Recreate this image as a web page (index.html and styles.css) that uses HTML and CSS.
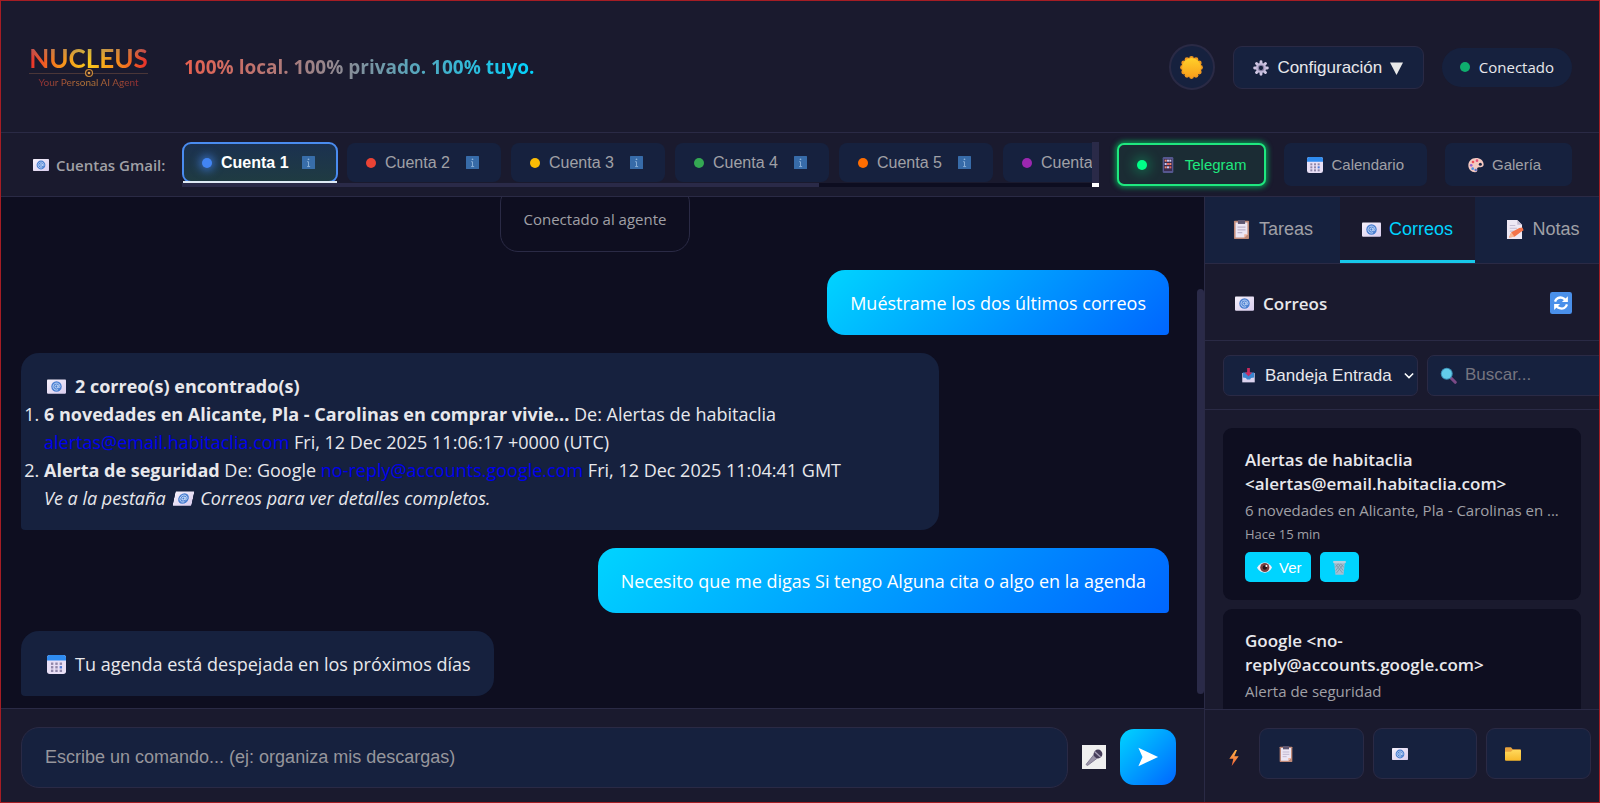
FILE: index.html
```html
<!DOCTYPE html>
<html lang="es">
<head>
    <meta charset="UTF-8">
    <meta name="viewport" content="width=device-width, initial-scale=1.0">
    <title>Nucleus</title>
    <link rel="stylesheet" href="styles.css">
</head>
<body>
    <svg class="sprite" aria-hidden="true">
        <defs>
            <linearGradient id="g-sun" x1="0" y1="0" x2="0" y2="1"><stop offset="0" stop-color="#ffd02a"/><stop offset="1" stop-color="#f9a01b"/></linearGradient>
            <linearGradient id="g-mail" x1="0" y1="0" x2="1" y2="1"><stop offset="0" stop-color="#f6f1fb"/><stop offset="1" stop-color="#d9cdee"/></linearGradient>
            <linearGradient id="g-folder" x1="0" y1="0" x2="0" y2="1"><stop offset="0" stop-color="#ffd95c"/><stop offset="1" stop-color="#f8b92b"/></linearGradient>
            <linearGradient id="g-bolt" x1="0" y1="0" x2="0" y2="1"><stop offset="0" stop-color="#ffb545"/><stop offset="1" stop-color="#f1603a"/></linearGradient>
        </defs>
        <symbol id="i-mail" viewBox="0 0 24 24">
            <rect x="0" y="3" width="24" height="18" rx="1" fill="url(#g-mail)"/>
            <circle cx="12" cy="12" r="6.6" fill="#4a7fd0"/>
            <circle cx="12" cy="12" r="2" fill="none" stroke="#cfe0fb" stroke-width="1.2"/>
            <path d="M14 10v2.6c0 1.6 2.4 1.4 2.4-.6A4.4 4.4 0 1 0 14 16" fill="none" stroke="#cfe0fb" stroke-width="1.1"/>
        </symbol>
        <symbol id="i-sun" viewBox="0 0 24 24">
            <g fill="#f39a1e">
                <circle cx="12" cy="2.600" r="2.500"/><circle cx="16.700" cy="3.900" r="2.500"/><circle cx="20.100" cy="7.300" r="2.500"/>
                <circle cx="21.400" cy="12" r="2.500"/><circle cx="20.100" cy="16.700" r="2.500"/><circle cx="16.700" cy="20.100" r="2.500"/>
                <circle cx="12" cy="21.400" r="2.500"/><circle cx="7.300" cy="20.100" r="2.500"/><circle cx="3.900" cy="16.700" r="2.500"/>
                <circle cx="2.600" cy="12" r="2.500"/><circle cx="3.900" cy="7.300" r="2.500"/><circle cx="7.300" cy="3.900" r="2.500"/>
            </g>
            <circle cx="12" cy="12" r="9.800" fill="url(#g-sun)"/>
        </symbol>
        <symbol id="i-gear" viewBox="0 0 24 24">
            <g stroke="#cfc6e2" stroke-width="4.400" stroke-linecap="round">
                <path d="M12 2.500v19M2.500 12h19M5.300 5.300l13.400 13.400M18.700 5.300L5.300 18.700"/>
            </g>
            <circle cx="12" cy="12" r="7.600" fill="#c3b9da"/>
            <circle cx="12" cy="12" r="5" fill="#8d84a8"/>
            <circle cx="12" cy="12" r="3.200" fill="#16213e"/>
        </symbol>
        <symbol id="i-info" viewBox="0 0 24 24">
            <rect width="24" height="24" rx="1" fill="#3b74b4"/>
            <circle cx="12" cy="6" r="1.600" fill="#9cc3ea"/>
            <path d="M9.500 10.500H12V19M9.500 19.500h5.500" fill="none" stroke="#9cc3ea" stroke-width="1.700"/>
        </symbol>
        <symbol id="i-phone" viewBox="0 0 24 24">
            <rect x="4" y="0" width="16" height="24" rx="2" fill="#55578f"/>
            <rect x="6" y="3" width="12" height="18" fill="#3a2c50"/>
            <g fill="#f08a6c"><rect x="7" y="4" width="3" height="3"/><rect x="14" y="9" width="3" height="3"/><rect x="7" y="14" width="3" height="3"/></g>
            <g fill="#c9c7f0"><rect x="10.500" y="4" width="3" height="3"/><rect x="14" y="4" width="3" height="3"/><rect x="7" y="9" width="3" height="3"/><rect x="10.500" y="14" width="3" height="3"/></g>
            <g fill="#e8655c"><rect x="10.500" y="9" width="3" height="3"/><rect x="14" y="14" width="3" height="3"/></g>
        </symbol>
        <symbol id="i-calendar" viewBox="0 0 24 24">
            <rect x="0" y="0" width="24" height="24" rx="3.500" fill="#e8dff5"/>
            <path d="M0 7V3.500A3.500 3.500 0 0 1 3.500 0h17A3.500 3.500 0 0 1 24 3.500V7z" fill="#2f8cf0"/>
            <g fill="#8f86a8">
                <rect x="5" y="9.500" width="3" height="3"/><rect x="10.500" y="9.500" width="3" height="3"/><rect x="16" y="9.500" width="3" height="3"/>
                <rect x="5" y="14" width="3" height="3"/><rect x="10.500" y="14" width="3" height="3"/><rect x="16" y="14" width="3" height="3" fill="#4a78d8"/>
                <rect x="5" y="18.500" width="3" height="3"/><rect x="10.500" y="18.500" width="3" height="3"/><rect x="16" y="18.500" width="3" height="3"/>
            </g>
        </symbol>
        <symbol id="i-palette" viewBox="0 0 24 24">
            <path d="M12 1.500C5 1.500.5 6.500.5 12.500S5 23 10.500 23c3.500 0 3.800-2.500 3.300-4.500-.5-2.500 1-3.500 3.500-3.200 3.500.4 6.200-.6 6.200-4C23.500 5.500 18.500 1.500 12 1.500z" fill="#f5c9c0"/>
            <circle cx="18.500" cy="11" r="2.300" fill="#16213e"/>
            <circle cx="13.500" cy="5.500" r="2" fill="#e3567c"/><circle cx="7.500" cy="7.500" r="2" fill="#f0525a"/>
            <circle cx="4.800" cy="12.500" r="2" fill="#9a62d0"/><circle cx="7" cy="17.500" r="2" fill="#4f8fe0"/><circle cx="11.500" cy="19.500" r="1.800" fill="#5a6fc8"/>
        </symbol>
        <symbol id="i-clipboard" viewBox="0 0 24 24">
            <rect x="2.500" y="1" width="19" height="23" rx="1" fill="#c08a78"/>
            <path d="M4.500 3h15v15l-4 4h-11z" fill="#ece6f4"/>
            <path d="M15.500 22v-4h4z" fill="#f2b49c"/>
            <path d="M7.500 0h9v5h-9z" fill="#5c5570"/>
            <path d="M7 9h10M7 12.500h10M7 16h6" stroke="#bdb4cc" stroke-width="1.400"/>
        </symbol>
        <symbol id="i-note" viewBox="0 0 24 24">
            <path d="M2.500 0h13l6 6v18h-19z" fill="#eee8f4"/>
            <path d="M15.500 0v6h6z" fill="#c5bdd2"/>
            <path d="M6 7h7M6 10.500h9M6 14h6" stroke="#c5bdd2" stroke-width="1.400"/>
            <path d="M5 22l3-6.500L18 10l4-.500 1.500 3.500-3.500 2-8 6z" fill="#f4734a"/>
            <path d="M5 22l3-6.500 4 5.500z" fill="#f7b592"/>
        </symbol>
        <symbol id="i-refresh" viewBox="0 0 24 24">
            <rect width="24" height="24" rx="2.500" fill="#4a90ea"/>
            <path d="M5.500 10.500C6.500 7 10 5.300 13.500 6.300c1.500.4 2.500 1.200 3.500 2.400M18.500 13.500C17.500 17 14 18.700 10.500 17.700 9 17.300 8 16.500 7 15.300" fill="none" stroke="#fff" stroke-width="2.600"/>
            <path d="M19.500 4.500v6.500H13zM4.500 19.500V13H11z" fill="#fff"/>
        </symbol>
        <symbol id="i-inbox" viewBox="0 0 24 24">
            <path d="M2 8h20v15H2z" fill="#dcd3ee"/>
            <path d="M3 7h18v8l-5 1-1.500 2.500h-5L8 16l-5-1z" fill="#3a86d0"/>
            <path d="M9.800 0h4.400v7h4L12 13 5.800 7h4z" fill="#c92a5e"/>
        </symbol>
        <symbol id="i-search" viewBox="0 0 24 24">
            <path d="M14.500 14.500l7 7" stroke="#7b4a86" stroke-width="4.400" stroke-linecap="round"/>
            <circle cx="9.500" cy="9.500" r="8.500" fill="#3d8fb5"/>
            <circle cx="9.500" cy="9.500" r="7" fill="#63cdea"/>
        </symbol>
        <symbol id="i-eye" viewBox="0 0 24 24">
            <path d="M0 12.500C3 6.500 8 3.800 12.500 3.800S21.500 7 24 12c-2.500 5.500-7 8.200-11.500 8.200S3 18 0 12.500z" fill="#f3eef7"/>
            <circle cx="12.500" cy="12" r="7.300" fill="#7a4040"/>
            <circle cx="12.500" cy="12" r="3.500" fill="#26141a"/>
            <circle cx="15" cy="9.500" r="1.600" fill="#fff"/>
        </symbol>
        <symbol id="i-trash" viewBox="0 0 24 24">
            <path d="M3.500 4h17l-2 19.500h-13z" fill="#a3bfd2"/>
            <path d="M6 7l11 14M10 6l8 11M14 6l5 6M18 7L7 21M14 6L6 17M10 6l-5 6" stroke="#74909f" stroke-width="1.100"/>
            <path d="M2 1.500h20V5H2z" fill="#b9d0de"/>
        </symbol>
        <symbol id="i-bolt" viewBox="0 0 24 24">
            <path d="M14 0L5 13h6L8.500 24 19 9.500h-6.500L16.500 0z" fill="url(#g-bolt)"/>
        </symbol>
        <symbol id="i-folder" viewBox="0 0 24 24">
            <path d="M0 3.500A1.500 1.500 0 0 1 1.500 2H9l2.500 3h11A1.500 1.500 0 0 1 24 6.500V10H0z" fill="#e8a33d"/>
            <path d="M0 8.500h9L11.500 6h11A1.500 1.500 0 0 1 24 7.500v13a1.500 1.500 0 0 1-1.500 1.500h-21A1.500 1.500 0 0 1 0 20.500z" fill="url(#g-folder)"/>
        </symbol>
        <symbol id="i-mic" viewBox="0 0 24 24">
            <path d="M12 9.500l3.500 3.500L5.500 20.500 4 19.500z" fill="#9b95a8" stroke="#77708a" stroke-width=".8"/>
            <circle cx="16" cy="9" r="4.400" fill="#463e5a"/>
            <path d="M12.500 6.500l6 5.500" stroke="#a9a2b8" stroke-width="1.300"/>
        </symbol>
        <symbol id="i-send" viewBox="0 0 24 24">
            <path d="M1.500 2L23 12 1.500 22l4.500-10z" fill="#fff"/>
        </symbol>
        <symbol id="i-chevron" viewBox="0 0 24 24">
            <path d="M2 7l10 10L22 7" fill="none" stroke="#fff" stroke-width="3.600"/>
        </symbol>
        <symbol id="i-down" viewBox="0 0 24 24">
            <path d="M0 1h24L12 24z" fill="#e8e8e8"/>
        </symbol>
    </svg>

    <header class="header">
        <div class="brand">
            <div class="logo">
                <span class="logo-name">NUCLEUS</span>
                <span class="logo-rule"><svg viewBox="0 0 12 12"><circle cx="6" cy="6" r="4.200" fill="#2a1c22" stroke="#c98a3a" stroke-width="1.400"/><circle cx="6" cy="6" r="1.600" fill="#e0a050"/></svg></span>
                <span class="logo-sub">Your Personal AI Agent</span>
            </div>
            <p class="slogan">100% local. 100% privado. 100% tuyo.</p>
        </div>
        <div class="header-actions">
            <button class="theme-btn" aria-label="Cambiar tema"><svg class="icon"><use href="#i-sun"/></svg></button>
            <button class="config-btn"><svg class="icon"><use href="#i-gear"/></svg>Configuración<svg class="caret"><use href="#i-down"/></svg></button>
            <div class="status"><span class="dot"></span>Conectado</div>
        </div>
    </header>

    <nav class="accounts">
        <span class="accounts-label"><svg class="icon"><use href="#i-mail"/></svg>Cuentas Gmail:</span>
        <div class="strip">
            <div class="strip-tabs">
                <button class="account active"><span class="dot blue"></span>Cuenta 1<svg class="info"><use href="#i-info"/></svg></button>
                <button class="account"><span class="dot red"></span>Cuenta 2<svg class="info"><use href="#i-info"/></svg></button>
                <button class="account"><span class="dot yellow"></span>Cuenta 3<svg class="info"><use href="#i-info"/></svg></button>
                <button class="account"><span class="dot green"></span>Cuenta 4<svg class="info"><use href="#i-info"/></svg></button>
                <button class="account"><span class="dot orange"></span>Cuenta 5<svg class="info"><use href="#i-info"/></svg></button>
                <button class="account"><span class="dot purple"></span>Cuenta 6<svg class="info"><use href="#i-info"/></svg></button>
            </div>
            <div class="bar-v"></div>
            <div class="bar-h"><div class="thumb"></div></div>
            <div class="bar-corner"></div>
        </div>
        <div class="services">
            <button class="service telegram"><span class="dot"></span><svg class="icon"><use href="#i-phone"/></svg>Telegram</button>
            <button class="service"><svg class="icon"><use href="#i-calendar"/></svg>Calendario</button>
            <button class="service"><svg class="icon"><use href="#i-palette"/></svg>Galería</button>
        </div>
    </nav>

    <main class="main">
        <section class="chat">
            <div class="messages">
                <div class="msg system">Conectado al agente</div>
                <div class="msg user">Muéstrame los dos últimos correos</div>
                <div class="msg bot">
                    <svg class="icon"><use href="#i-mail"/></svg><strong>2 correo(s) encontrado(s)</strong>
                    <ol>
                        <li><strong>6 novedades en Alicante, Pla - Carolinas en comprar vivie...</strong> De: Alertas de habitaclia <a href="mailto:alertas@email.habitaclia.com">alertas@email.habitaclia.com</a> Fri, 12 Dec 2025 11:06:17 +0000 (UTC)</li>
                        <li><strong>Alerta de seguridad</strong> De: Google <a href="mailto:no-reply@accounts.google.com">no-reply@accounts.google.com</a> Fri, 12 Dec 2025 11:04:41 GMT</li>
                    </ol>
                    <em>Ve a la pestaña <svg class="icon"><use href="#i-mail"/></svg>Correos para ver detalles completos.</em>
                </div>
                <div class="msg user">Necesito que me digas Si tengo Alguna cita o algo en la agenda</div>
                <div class="msg bot"><svg class="icon"><use href="#i-calendar"/></svg>Tu agenda está despejada en los próximos días</div>
                <div class="messages-bar"></div>
            </div>
            <form class="composer">
                <input type="text" aria-label="Comando" placeholder="Escribe un comando... (ej: organiza mis descargas)">
                <button type="button" class="mic-btn" aria-label="Dictar"><svg><use href="#i-mic"/></svg></button>
                <button type="button" class="send-btn" aria-label="Enviar"><svg><use href="#i-send"/></svg></button>
            </form>
        </section>

        <aside class="sidebar">
            <div class="tabs">
                <button class="tab"><svg class="icon"><use href="#i-clipboard"/></svg>Tareas</button>
                <button class="tab active"><svg class="icon"><use href="#i-mail"/></svg>Correos</button>
                <button class="tab"><svg class="icon"><use href="#i-note"/></svg>Notas</button>
            </div>
            <div class="panel-head">
                <h2><svg class="icon"><use href="#i-mail"/></svg>Correos</h2>
                <button class="refresh-btn" aria-label="Actualizar"><svg><use href="#i-refresh"/></svg></button>
            </div>
            <div class="filters">
                <div class="field folder-field">
                    <svg class="field-icon"><use href="#i-inbox"/></svg>
                    <select aria-label="Carpeta"><option>Bandeja Entrada</option></select>
                    <svg class="field-arrow"><use href="#i-chevron"/></svg>
                </div>
                <div class="field search-field">
                    <svg class="field-icon"><use href="#i-search"/></svg>
                    <input type="text" aria-label="Buscar" placeholder="Buscar...">
                </div>
            </div>
            <div class="mails">
                <article class="mail">
                    <h3>Alertas de habitaclia &lt;alertas@email.habitaclia.com&gt;</h3>
                    <p class="subject">6 novedades en Alicante, Pla - Carolinas en ...</p>
                    <p class="time">Hace 15 min</p>
                    <div class="mail-actions">
                        <button><svg class="icon"><use href="#i-eye"/></svg>Ver</button>
                        <button aria-label="Eliminar"><svg class="icon"><use href="#i-trash"/></svg></button>
                    </div>
                </article>
                <article class="mail">
                    <h3>Google &lt;no-reply@accounts.google.com&gt;</h3>
                    <p class="subject">Alerta de seguridad</p>
                </article>
            </div>
            <div class="quick">
                <svg class="icon"><use href="#i-bolt"/></svg>
                <button aria-label="Tareas"><svg class="icon"><use href="#i-clipboard"/></svg></button>
                <button aria-label="Correos"><svg class="icon"><use href="#i-mail"/></svg></button>
                <button aria-label="Archivos"><svg class="icon"><use href="#i-folder"/></svg></button>
            </div>
        </aside>
    </main>
</body>
</html>
```
FILE: styles.css
```css
:root {
    --bg: #0e0e20;
    --panel: #1a1a2e;
    --field: #16213e;
    --line: #2a2a45;
    --text: #e8e8ec;
    --muted: #a0a0a6;
    --cyan: #00d4ff;
    --grad: linear-gradient(135deg, #00d4ff, #0066ff);
}

* {
    box-sizing: border-box;
    margin: 0;
    padding: 0;
}

body {
    height: 100vh;
    display: flex;
    flex-direction: column;
    overflow: hidden;
    border: 1px solid #a51d24;
    background: var(--bg);
    color: var(--text);
    font-family: "Segoe UI", "Open Sans", "Noto Sans", sans-serif;
    font-size: 17px;
}

button, input, select {
    font-family: Arial, "Liberation Sans", sans-serif;
    font-size: 16px;
    color: var(--text);
    border: none;
    outline: none;
}

button {
    display: flex;
    align-items: center;
    cursor: pointer;
}

.sprite {
    position: absolute;
    width: 0;
    height: 0;
}

.icon {
    width: 16px;
    height: 16px;
    flex: none;
}

.dot {
    width: 10px;
    height: 10px;
    border-radius: 50%;
    flex: none;
}

/* header */
.header {
    height: 132px;
    flex: none;
    display: flex;
    align-items: center;
    justify-content: space-between;
    padding: 1px 27px 0 28px;
    background: var(--panel);
    border-bottom: 1px solid var(--line);
}

.brand, .header-actions {
    display: flex;
    align-items: center;
}

.brand {
    gap: 36px;
}

.header-actions {
    gap: 18px;
}

.logo {
    width: 119px;
    display: flex;
    flex-direction: column;
    align-items: center;
}

.logo-name {
    font: bold 26px/28px Lato, sans-serif;
    color: transparent;
    background: linear-gradient(rgba(130, 130, 130, 0.6), transparent 60%), linear-gradient(90deg, #e82c2c, #f58a1c 25%, #f8c81c 50%, #f58a1c 75%, #e82c2c);
    -webkit-background-clip: text;
    background-clip: text;
}

.logo-rule {
    width: 100%;
    height: 2px;
    display: flex;
    align-items: center;
    justify-content: center;
    background: linear-gradient(#4a3638, #4a3638) center / 100% 1px no-repeat;
}

.logo-rule svg {
    width: 10px;
    height: 10px;
    flex: none;
}

.logo-sub {
    font: 10px/16px Lato, sans-serif;
    color: transparent;
    background: linear-gradient(90deg, #8f2c34, #b87b38 50%, #8f2c34);
    -webkit-background-clip: text;
    background-clip: text;
}

.slogan {
    font-weight: 700;
    font-size: 19px;
    color: transparent;
    background: linear-gradient(90deg, #e8604f, #8d8a93 45%, #00d4ff);
    -webkit-background-clip: text;
    background-clip: text;
}

.theme-btn {
    width: 46px;
    height: 46px;
    justify-content: center;
    border-radius: 50%;
    border: 2px solid var(--line);
    background: var(--field);
}

.theme-btn .icon {
    width: 23px;
    height: 23px;
}

.config-btn {
    width: 191px;
    height: 43px;
    justify-content: center;
    gap: 8px;
    padding-top: 2px;
    font-size: 17px;
    border: 1px solid var(--line);
    border-radius: 9px;
    background: var(--field);
}

.caret {
    width: 13px;
    height: 13px;
}

.status {
    height: 39px;
    display: flex;
    align-items: center;
    gap: 9px;
    padding: 0 18px;
    border-radius: 20px;
    background: var(--field);
    font-size: 15px;
}

.status .dot {
    background: #0fae6e;
}

/* accounts bar */
.accounts {
    height: 64px;
    flex: none;
    display: flex;
    align-items: center;
    gap: 18px;
    padding: 0 27px 0 32px;
    background: var(--panel);
    border-bottom: 1px solid var(--line);
}

.accounts-label {
    width: 131px;
    flex: none;
    display: flex;
    align-items: center;
    gap: 7px;
    color: var(--muted);
    font-size: 15px;
    font-weight: 600;
    white-space: nowrap;
}

.strip {
    flex: 1;
    min-width: 0;
    display: grid;
    grid-template-columns: minmax(0, 1fr) 7px;
    grid-template-rows: 41px 4px;
}

.strip-tabs {
    display: flex;
    gap: 8px;
    overflow: hidden;
}

.bar-v, .thumb {
    background: #2a2a48;
}

.bar-h {
    background: #0d0d20;
}

.thumb {
    width: 70%;
    height: 100%;
}

.bar-corner {
    background: #fff;
}

.account {
    position: relative;
    width: 156px;
    height: 41px;
    flex: none;
    padding: 0 22px 0 19px;
    gap: 9px;
    color: var(--muted);
    background: var(--field);
    border: 1px solid transparent;
    border-radius: 9px;
    background-clip: padding-box;
    white-space: nowrap;
}

.account .info {
    width: 13px;
    height: 13px;
    margin-left: auto;
    opacity: 0.9;
}

.account.active {
    color: #fff;
    font-weight: bold;
    background: #1e3644 linear-gradient(#1b3150, #1f3b42) padding-box;
    border: 2px solid #4a8cf0;
    padding: 0 21px 0 18px;
}

.account.active::after {
    content: "";
    position: absolute;
    left: -1px;
    right: -1px;
    bottom: -2px;
    height: 2px;
    background: #dfeaf5;
}

.blue {
    background: #4285f4;
    box-shadow: 0 0 9px 3px rgba(66, 133, 244, 0.6);
}
.red { background: #ea4335; }
.yellow { background: #fbbc05; }
.green { background: #34a853; }
.orange { background: #ff6d01; }
.purple { background: #9c27b0; }

.services {
    display: flex;
    gap: 18px;
}

.service {
    min-width: 127px;
    height: 43px;
    gap: 8px;
    padding: 0 23px;
    font-size: 15px;
    color: var(--muted);
    background: var(--field);
    border-radius: 7px;
}

.service.telegram {
    padding: 0 18px;
    gap: 9px;
    color: #1fe87f;
    background: #1b2c34;
    border: 2px solid #1fe87f;
    box-shadow: 0 0 5px 2px rgba(0, 210, 100, 0.6);
}

.telegram .dot {
    margin-right: 4px;
    background: #00ff88;
    box-shadow: 0 0 12px 4px rgba(0, 255, 136, 0.25);
}

/* chat */
.main {
    flex: 1;
    min-height: 0;
    display: flex;
}

.chat {
    flex: 1;
    min-width: 0;
    display: flex;
    flex-direction: column;
}

.messages {
    position: relative;
    flex: 1;
    min-height: 0;
    display: flex;
    flex-direction: column;
    justify-content: flex-end;
    gap: 18px;
    padding: 0 35px 12px 20px;
    overflow: hidden;
    font-size: 18px;
}

.messages-bar {
    position: absolute;
    right: 0;
    top: 92px;
    bottom: 14px;
    width: 7px;
    border-radius: 4px;
    background: #2a2a48;
}

.msg {
    flex: none;
    max-width: 80%;
    padding: 19px 23px 18px;
    line-height: 28px;
    border-radius: 18px;
}

.msg.system {
    align-self: center;
    font-size: 15px;
    color: var(--muted);
    border: 1px solid var(--line);
}

.msg.user {
    align-self: flex-end;
    color: #fff;
    background: var(--grad);
    border-bottom-right-radius: 4px;
}

.msg.bot {
    align-self: flex-start;
    background: var(--field);
    border-bottom-left-radius: 4px;
}

.msg .icon {
    width: 19px;
    height: 19px;
    margin: 0 9px 0 3px;
    vertical-align: -3px;
}

.msg em .icon {
    margin: 0 7px 0 4px;
    transform: skewX(-12deg);
}

.msg a {
    color: #0000ee;
    text-decoration: none;
}

.composer {
    height: 94px;
    flex: none;
    display: flex;
    align-items: center;
    gap: 14px;
    padding: 3px 28px 0 20px;
    background: var(--panel);
    border-top: 1px solid var(--line);
}

.composer input {
    flex: 1;
    min-width: 0;
    height: 61px;
    padding: 0 23px;
    font-size: 18px;
    border: 1px solid var(--line);
    border-radius: 18px;
    background: var(--field);
}

::placeholder {
    color: #96969c;
}

.mic-btn {
    width: 24px;
    height: 24px;
    background: #efefef;
}

.mic-btn svg {
    width: 24px;
    height: 24px;
}

.send-btn {
    width: 56px;
    height: 56px;
    justify-content: center;
    border-radius: 14px;
    background: var(--grad);
}

.send-btn svg {
    width: 22px;
    height: 22px;
}

/* sidebar */
.sidebar {
    width: 395px;
    flex: none;
    display: flex;
    flex-direction: column;
    overflow: hidden;
    background: var(--panel);
    border-left: 1px solid var(--line);
}

.tabs {
    height: 67px;
    flex: none;
    display: flex;
    background: var(--field);
    border-bottom: 1px solid var(--line);
}

.tab {
    width: 135px;
    flex: none;
    justify-content: center;
    gap: 8px;
    padding-top: 2px;
    font-size: 18px;
    color: var(--muted);
    background: none;
    border-bottom: 3px solid transparent;
}

.tab .icon {
    width: 19px;
    height: 19px;
}

.tab.active {
    color: var(--cyan);
    background: var(--panel);
    border-bottom-color: #17c8ea;
}

.panel-head {
    height: 77px;
    flex: none;
    display: flex;
    align-items: center;
    justify-content: space-between;
    padding: 2px 27px 0 30px;
    border-bottom: 1px solid var(--line);
}

.panel-head h2 {
    display: flex;
    align-items: center;
    gap: 9px;
    font-size: 17px;
    font-weight: 600;
}

.panel-head .icon {
    width: 19px;
    height: 19px;
}

.refresh-btn {
    background: none;
}

.refresh-btn svg {
    width: 22px;
    height: 22px;
}

.filters {
    height: 69px;
    flex: none;
    display: flex;
    align-items: center;
    gap: 9px;
    padding: 0 18px;
    border-bottom: 1px solid var(--line);
}

.field {
    position: relative;
    flex: none;
}

.folder-field {
    width: 195px;
}

.search-field {
    width: 230px;
}

.field select, .field input {
    width: 100%;
    height: 41px;
    padding-left: 41px;
    font-size: 17px;
    border: 1px solid var(--line);
    border-radius: 7px;
    background: var(--field);
    appearance: none;
}

.field input {
    padding-left: 37px;
}

.field ::placeholder {
    color: #757580;
}

.field-icon, .field-arrow {
    position: absolute;
    top: 12px;
    left: 18px;
    width: 15px;
    height: 17px;
    pointer-events: none;
}

.search-field .field-icon {
    left: 13px;
    width: 17px;
}

.field-arrow {
    left: auto;
    right: 4px;
    width: 10px;
}

.mails {
    flex: 1;
    min-height: 0;
    display: flex;
    flex-direction: column;
    gap: 9px;
    padding: 18px;
    overflow: hidden;
}

.mail {
    flex: none;
    padding: 20px 22px 18px;
    border-radius: 9px;
    background: var(--bg);
}

.mail h3 {
    font-size: 17px;
    line-height: 24px;
    font-weight: 600;
    margin-bottom: 2px;
}

.subject {
    font-size: 15px;
    line-height: 24px;
    color: var(--muted);
    white-space: nowrap;
}

.time {
    font-size: 13px;
    line-height: 24px;
    color: var(--muted);
}

.mail-actions {
    display: flex;
    gap: 9px;
    margin-top: 6px;
}

.mail-actions button {
    height: 30px;
    gap: 7px;
    padding: 0 9px 0 12px;
    font-size: 15px;
    color: #fff;
    border-radius: 5px;
    background: var(--cyan);
}

.mail-actions .icon {
    width: 15px;
    height: 15px;
}

.mail-actions button:last-child {
    padding: 0 12px;
}

.quick {
    height: 93px;
    flex: none;
    display: flex;
    align-items: center;
    gap: 9px;
    padding: 0 8px 5px 21px;
    border-top: 1px solid var(--line);
}

.quick > .icon {
    margin: 8px 8px 0 0;
}

.quick button {
    height: 51px;
    flex: 1;
    padding-left: 18px;
    border: 1px solid var(--line);
    border-radius: 9px;
    background: var(--field);
}
```
